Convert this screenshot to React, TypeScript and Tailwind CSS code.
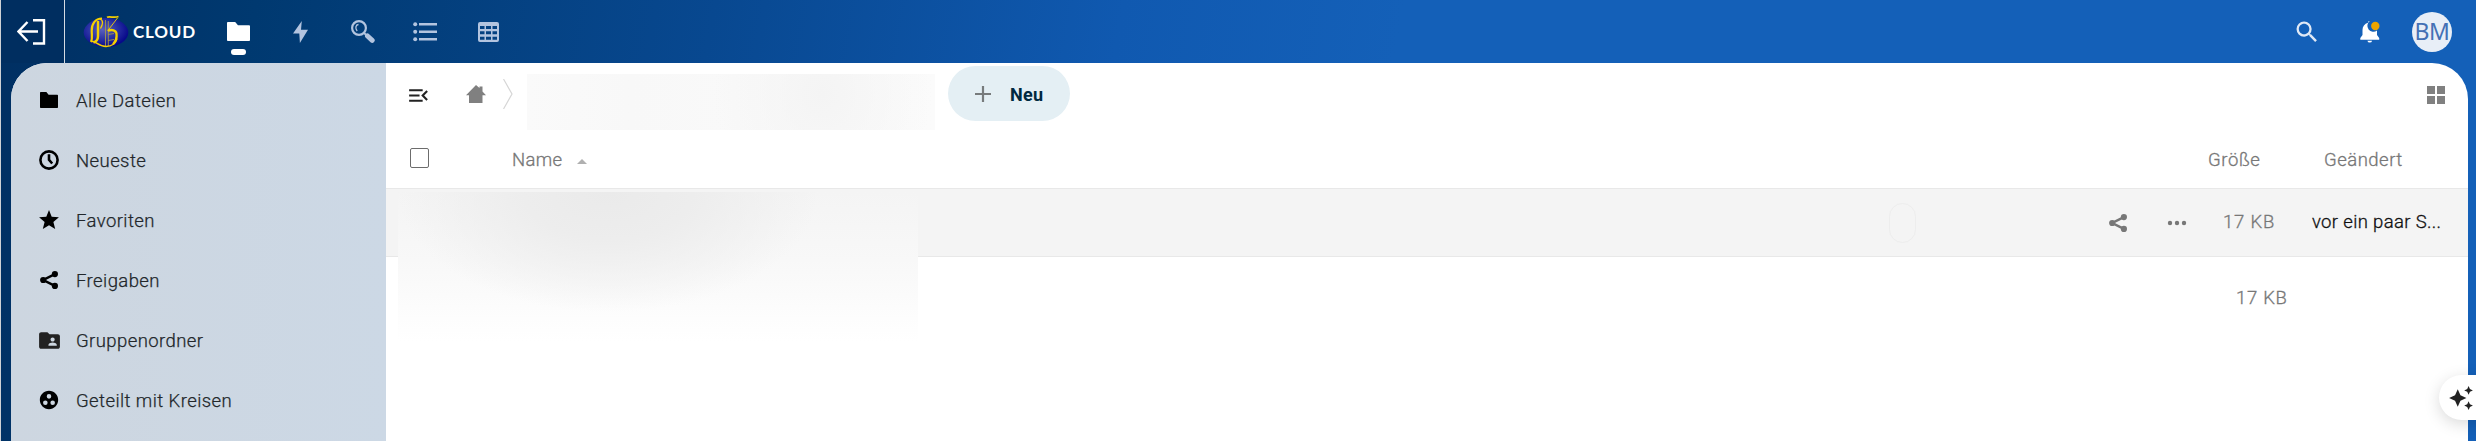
import type { ReactNode } from "react";
import { MdAutoAwesome, MdFolderShared, MdGroupWork, MdMenuOpen, MdSearch } from "react-icons/md";

function FolderIcon({ className }: { className?: string }) {
  return (
    <svg viewBox="0 0 18 16" preserveAspectRatio="none" className={className} fill="currentColor">
      <path d="M.7 0C.3 0 0 .3 0 .7v14.6c0 .4.3.7.7.7h16.6c.4 0 .7-.3.7-.7V3.4c0-.4-.3-.7-.7-.7H8.6L6.4 0z" />
    </svg>
  );
}

function ShareIcon({ className }: { className?: string }) {
  return (
    <svg viewBox="0 0 18 18" className={className} fill="currentColor">
      <circle cx="3.2" cy="9" r="3.1" />
      <circle cx="14.9" cy="3.1" r="3.1" />
      <circle cx="14.9" cy="14.9" r="3.1" />
      <path d="M14.9 3.1 3.2 9l11.7 5.9" fill="none" stroke="currentColor" strokeWidth="2.5" />
    </svg>
  );
}

function ClockIcon() {
  return (
    <svg viewBox="0 0 20 20" className="h-5 w-5" fill="none" stroke="currentColor">
      <circle cx="10" cy="10" r="8.6" strokeWidth="2.6" />
      <path d="M10 4.3v5.5l3.2 3.7" strokeWidth="2.6" />
    </svg>
  );
}

function StarIcon() {
  return (
    <svg viewBox="0 0 20 19" className="mb-[2px] h-[19px] w-5" fill="currentColor">
      <path d="m10 0 2.7 6.8 7.2.5-5.5 4.7 1.8 7L10 15.2 3.8 19l1.8-7L.1 7.3l7.2-.5z" />
    </svg>
  );
}

function Logo() {
  return (
    <svg viewBox="0 0 46 34" className="h-[34px] w-[46px] shrink-0" fill="none">
      <defs>
        <radialGradient id="orb" cx=".42" cy=".4" r=".6">
          <stop offset="0" stopColor="#5a60bc" />
          <stop offset=".55" stopColor="#2a32a4" />
          <stop offset="1" stopColor="#07088a" />
        </radialGradient>
      </defs>
      <ellipse cx="23" cy="17.5" rx="22.3" ry="14.5" fill="url(#orb)" />
      <path d="M22.5 5v26M25.3 6v25M25 19.5l6-1M25 25.500l6-1" stroke="#a49749" strokeWidth=".9" />
      <g stroke="#f5d000">
        <path d="M19 3.500C12 3.500 8.700 9 8.700 15.500c0 5 1 8-.7 11.500" strokeWidth="2.200" />
        <path d="M15 6v15c0 3-1.500 5.500-4.500 6.500" strokeWidth="2.400" />
        <path d="M17 4c4 1.500 2.500 6 .5 9.500" strokeWidth="1.300" />
        <path d="M8 26.500c4-1.500 7 5 15 5 6 0 10-3.500 11-8" strokeWidth="1.500" />
        <path d="M25 15.700c4-1.500 8-.5 8.500 3 .5 4-.5 7.500-3.500 10.500" strokeWidth="2.300" />
        <path d="M24.500 16 34.500 3" strokeWidth=".9" />
        <path d="M24 2.300c3-1.500 7 1.200 11.500-.8" strokeWidth="1.800" />
      </g>
    </svg>
  );
}

function HeaderNav() {
  return (
    <nav className="flex h-full items-center text-[#b3c4df]">
      <div className="flex h-full w-[52px] flex-col items-center pt-[22px] text-white">
        <FolderIcon className="h-[19px] w-[23px]" />
        <span className="mt-2 h-[6px] w-[15px] rounded-full bg-white" />
      </div>
      <svg viewBox="0 0 15 22" className="ml-[29px] h-[22px] w-[15px]" fill="currentColor">
        <path d="M8.8 0 0 12.6h6.3L6.9 22 15 8.700H8z" />
      </svg>
      <svg viewBox="0 0 24 23" className="ml-[43px] h-[23px] w-6" fill="none" stroke="currentColor">
        <circle cx="8" cy="8" r="6.9" strokeWidth="2.2" />
        <path d="M7.5 4.500C4.500 4.700 4 8.500 6.200 11" strokeWidth="1.3" />
        <path d="m12.5 12.5 2.5 2.3" strokeWidth="2" />
        <path d="m16.5 16 4.700 4.300" strokeWidth="5" strokeLinecap="round" />
      </svg>
      <svg viewBox="0 0 24 20" className="ml-[38px] h-5 w-6" fill="currentColor">
        <circle cx="2.2" cy="2.3" r="2" />
        <circle cx="2.2" cy="9.8" r="2" />
        <circle cx="2.2" cy="17.3" r="2" />
        <path d="M6 1h18v2.500H6zM6 8.500h18V11H6zM6 16h18v2.500H6z" />
      </svg>
      <svg viewBox="0 0 21 20" className="ml-[41px] h-5 w-[21px]" fill="currentColor" fillRule="evenodd">
        <path d="M2 0h17a2 2 0 0 1 2 2v16a2 2 0 0 1-2 2H2a2 2 0 0 1-2-2V2a2 2 0 0 1 2-2zM2 4v3h4.500V4zM8 4v3h5V4zM14.500 4v3H19V4zM2 9.200v3h4.500v-3zM8 9.200v3h5v-3zM14.500 9.200v3H19v-3zM2 14.800v3h4.500v-3zM8 14.800v3h5v-3zM14.500 14.800v3H19v-3z" />
      </svg>
    </nav>
  );
}

function Header() {
  return (
    <header className="flex h-[63px] items-center">
      <div className="flex h-full w-[64px] shrink-0 items-center border-r border-[#d5dbe3] bg-[#002e60] pl-4">
        <svg viewBox="0 0 29 26" className="h-[26px] w-[29px]" fill="none" stroke="#fff" strokeWidth="2.4">
          <path d="M16 1.200h11v23.300H16M1.500 12.500H21M10.500 3l-9 9.500 9 9.500" />
        </svg>
      </div>
      <div className="ml-[18px] flex w-[129px] items-center">
        <Logo />
        <span className="ml-[4px] font-['Lato'] text-[17px] leading-none font-bold tracking-[0.8px] text-white">CLOUD</span>
      </div>
      <HeaderNav />
      <div className="ml-auto flex items-center pr-6">
        <MdSearch className="mr-[39px] h-[28px] w-[28px] text-[#e0e9f6]" />
        <svg viewBox="0 0 20 22" className="mr-[32px] h-[22px] w-5" fill="#fff">
          <path d="M9.700 0C8.600 0 8 .7 8 1.700 4.500 2.700 2.500 5.500 2.500 9v5L.3 17v1.700h18.900V17L17 14V9.500A5.800 5.800 0 0 1 9.700 0zM7.400 19.700a2.400 2.400 0 0 0 4.700 0z" />
          <circle cx="15.300" cy="5" r="4.200" fill="#eda500" />
        </svg>
        <div className="flex h-10 w-10 items-center justify-center rounded-full bg-[#e8eef7] font-['Noto_Sans'] text-[23px] tracking-[-0.5px] text-[#4470b5]">
          BM
        </div>
      </div>
    </header>
  );
}

interface NavItem {
  label: string;
  icon: ReactNode;
}

const navItems: NavItem[] = [
  { label: "Alle Dateien", icon: <FolderIcon className="h-4 w-[18px]" /> },
  { label: "Neueste", icon: <ClockIcon /> },
  { label: "Favoriten", icon: <StarIcon /> },
  { label: "Freigaben", icon: <ShareIcon className="h-[18px] w-[18px]" /> },
  { label: "Gruppenordner", icon: <MdFolderShared className="h-[25px] w-[25px] text-[#222]" /> },
  { label: "Geteilt mit Kreisen", icon: <MdGroupWork className="h-[22px] w-[22px]" /> },
];

function Sidebar() {
  return (
    <aside className="w-[375px] shrink-0 bg-linear-to-r from-[#cdd6e0] to-[#ccd8e5] pt-[7px]">
      {navItems.map((item) => (
        <div key={item.label} className="flex h-[60px] items-center pl-6 text-black">
          <span className="flex w-[28px] items-center justify-center">{item.icon}</span>
          <span className="mt-[3px] ml-[13px] text-[18.5px] font-light tracking-[0.42px] text-[#22272b] [-webkit-text-stroke:0.25px]">
            {item.label}
          </span>
        </div>
      ))}
    </aside>
  );
}

function Toolbar() {
  return (
    <div className="flex h-[70px] items-start">
      <MdMenuOpen className="mt-[20px] ml-[20px] h-[25px] w-[25px] text-[#222]" />
      <svg viewBox="0 0 20 18" className="mt-[22px] ml-[35px] h-[18px] w-5" fill="#808080">
        <path d="M10 0 0 10.200h3V18h13.500v-7.800H20L16.500 6.500V1.500h-3V3z" />
      </svg>
      <svg viewBox="0 0 10 30" className="mt-4 ml-[17px] h-[30px] w-[10px]" fill="none" stroke="#d6d6d6">
        <path d="m.5 0 8.500 15L.5 30" strokeWidth="1.2" />
      </svg>
      <div className="mt-[11px] ml-[14px] h-14 w-[408px] bg-linear-to-r from-[#fafafa] via-[#f8f8f8] via-25% to-[#fbfbfb]">
        <div className="h-full w-full bg-[radial-gradient(ellipse_110px_120px_at_295px_20px,#f4f4f4,transparent)]" />
      </div>
      <button
        type="button"
        className="mt-[3px] ml-[13px] flex h-[55px] w-[122px] items-center rounded-full bg-[#e4eff4] pl-[27px]"
      >
        <svg viewBox="0 0 16 16" className="h-4 w-4" stroke="#777b7c" strokeWidth="2.2">
          <path d="M8 0v16M0 8h16" />
        </svg>
        <span className="mt-px ml-[19px] font-['Roboto'] text-[18px] font-bold tracking-[0.3px] text-[#00293f]">Neu</span>
      </button>
      <svg viewBox="0 0 18 18" className="mt-[23px] mr-[23px] ml-auto h-[18px] w-[18px]" fill="#808080">
        <path d="M0 0h8v8H0zM10 0h8v8h-8zM0 10h8v8H0zM10 10h8v8h-8z" />
      </svg>
    </div>
  );
}

function FileList() {
  return (
    <div className="relative text-[18.5px] font-light tracking-[0.35px] text-[#777] [-webkit-text-stroke:0.3px]">
      <div className="flex h-[56px] items-center border-b border-[#e8e8e8]">
        <span className="mb-[5px] ml-6 h-5 w-[19px] rounded-[2px] border border-[#6c6c6c]" />
        <span className="ml-[83px] w-[65px]">Name</span>
        <span className="mt-[2px] border-x-[5px] border-b-[5px] border-x-transparent border-b-[#b0b0b0]" />
        <span className="ml-auto w-[116px] tracking-[0.6px]">Größe</span>
        <span className="w-[144px] tracking-[0.5px]">Geändert</span>
      </div>
      <div className="flex h-[68px] items-center border-b border-[#e8e8e8] bg-[#f4f4f4]">
        <span className="ml-[1503px] h-10 w-[27px] rounded-full border border-[#ededed]" />
        <ShareIcon className="ml-auto h-[18px] w-[18px]" />
        <svg viewBox="0 0 18 4" className="ml-[41px] h-1 w-[18px] overflow-visible" fill="#777">
          <circle cx="2" cy="2" r="2.2" />
          <circle cx="9" cy="2" r="2.2" />
          <circle cx="16" cy="2" r="2.2" />
        </svg>
        <span className="mt-px ml-[37px] w-[89px] tracking-[0.8px]">17 KB</span>
        <span className="mt-px w-[156px] whitespace-nowrap text-[#111]">vor ein paar S...</span>
      </div>
      <div className="flex h-[83px] items-center justify-end">
        <span className="w-[232px] tracking-[0.7px]">17 KB</span>
      </div>
      {/* redacted file names */}
      <div className="absolute top-[59px] left-3 h-[150px] w-[520px] bg-linear-to-b from-[#f4f4f4] via-[#f8f8f8] via-45% to-white">
        <div className="h-full w-full bg-[radial-gradient(ellipse_210px_120px_at_210px_0px,#eaeaea,#ededed_40%,transparent)]" />
      </div>
    </div>
  );
}

export default function App() {
  return (
    <div className="relative h-[441px] w-[2476px] overflow-hidden border-l border-[#cdd1d5] bg-linear-[100deg,#002f62_0%,#003970_10%,#084890_28%,#1059b0_44%,#1460b8_55%,#1460b8_100%] font-['Roboto',sans-serif]">
      <Header />
      <div className="mr-2 ml-[10px] flex h-[378px] overflow-hidden rounded-t-[36px] bg-white">
        <Sidebar />
        <main className="min-w-0 flex-1">
          <Toolbar />
          <FileList />
        </main>
      </div>
      <button
        type="button"
        className="absolute top-[375px] left-[2438px] h-[45px] w-[60px] rounded-l-full bg-white pl-[9px] text-[#222] shadow-[0_4px_16px_rgba(0,0,0,0.15)]"
      >
        <MdAutoAwesome className="h-[26px] w-[26px]" />
      </button>
    </div>
  );
}
